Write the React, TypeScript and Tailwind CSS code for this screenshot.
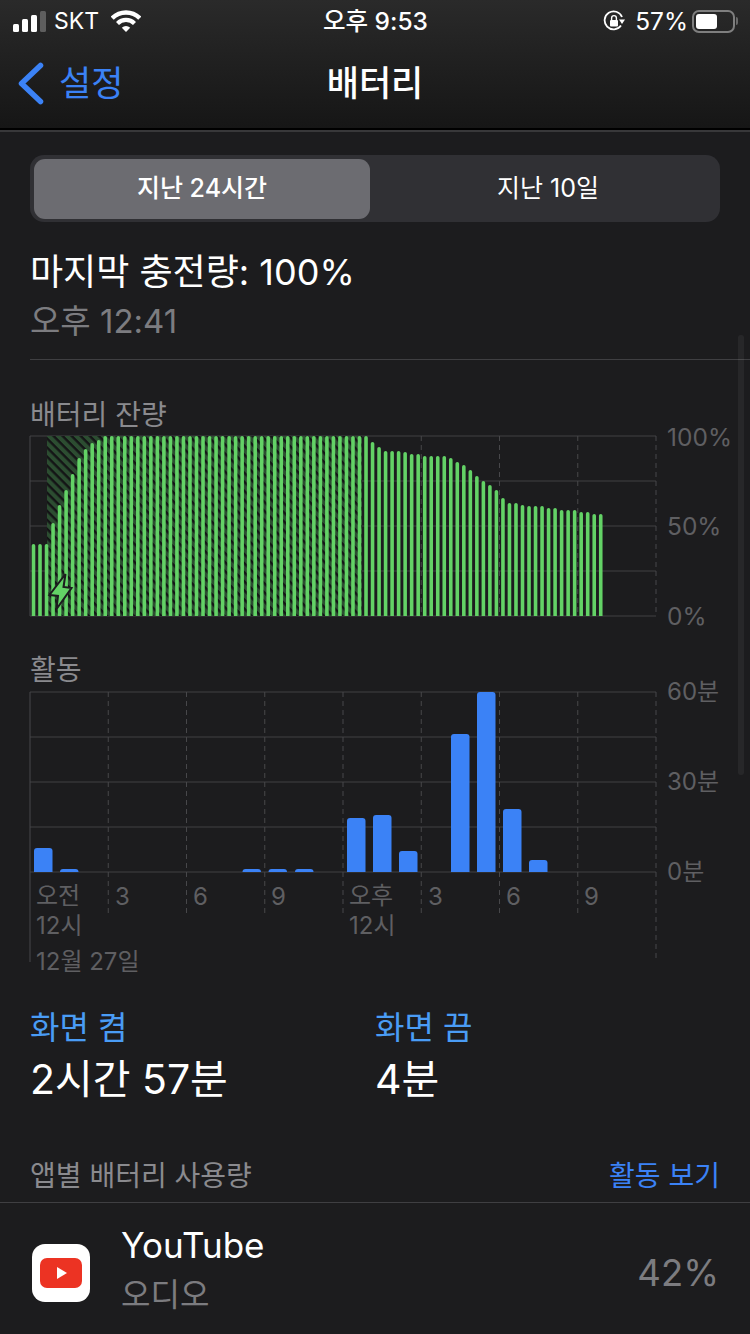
const chargeTops = [544, 544, 544, 523, 505, 490, 474, 458, 449, 443, 440];
const drainTops = [
  442, 447, 451, 451, 451, 452, 454, 454, 456, 456, 456, 456, 458, 462, 465, 470, 476, 481, 485, 490, 498, 503, 503,
  505, 506, 506, 506, 508, 508, 510, 510, 510, 512, 512, 514, 514,
];
// 88 slots: charging ramp, 41 full bars, then the drain
const batteryTops = [...chargeTops, ...Array(41).fill(436), ...drainTops];

const activityBars = [
  { x: 34, top: 848 },
  { x: 60, top: 869 },
  { x: 242.5, top: 869 },
  { x: 268.5, top: 869 },
  { x: 295, top: 869 },
  { x: 347, top: 818 },
  { x: 373, top: 815 },
  { x: 399, top: 851 },
  { x: 451, top: 734 },
  { x: 477, top: 692 },
  { x: 503, top: 809 },
  { x: 529, top: 860 },
];

const columns = [30, 108.25, 186.5, 264.75, 343, 421.25, 499.5, 577.75, 656];
const rows = [0, 45, 90, 135, 180];

const StatusBar = () => (
  <div className="flex h-[44px] items-center justify-between pb-[2px] pl-[13px] pr-[12px] text-white">
    <div className="flex w-[200px] items-center">
      <div className="flex h-[21px] items-end gap-[3px]">
        <div className="h-[8px] w-[6px] rounded-[1.5px] bg-white"></div>
        <div className="h-[13px] w-[6px] rounded-[1.5px] bg-white"></div>
        <div className="h-[17px] w-[6px] rounded-[1.5px] bg-white"></div>
        <div className="h-[21px] w-[6px] rounded-[1.5px] bg-[#5e5e5e]"></div>
      </div>
      <span className="ml-[8px] text-[23px] leading-[30px]">SKT</span>
      <svg width="30" height="22" viewBox="0 0 30 22" className="ml-[12px]">
        <path d="M15 22 L10.8 17.8 A6 6 0 0 1 19.2 17.8 Z" fill="#fff" />
        <path d="M6.5 13.5 A12 12 0 0 1 23.5 13.5" stroke="#fff" strokeWidth="4.2" fill="none" />
        <path d="M1.2 8.2 A19.5 19.5 0 0 1 28.8 8.2" stroke="#fff" strokeWidth="4.4" fill="none" />
      </svg>
    </div>
    <span className="text-[24.5px] font-medium leading-[30px]">오후 9:53</span>
    <div className="flex w-[200px] items-center justify-end">
      <svg width="22" height="22" viewBox="0 0 22 22" className="mr-[10px]">
        <path d="M18 15.5 A9 9 0 1 1 19 7" stroke="#fff" strokeWidth="1.8" fill="none" />
        <path d="M16 9.5 L22 9.5 L19 14 Z" fill="#fff" />
        <rect x="7" y="10" width="8" height="6.5" rx="1" fill="#fff" />
        <path d="M8.6 10 V8 A2.4 2.4 0 0 1 13.4 8 V10" stroke="#fff" strokeWidth="1.4" fill="none" />
      </svg>
      <span className="text-[24.5px] leading-[30px]">57%</span>
      <div className="ml-[4px] flex h-[23px] w-[43px] items-center rounded-[7px] border-2 border-[#7f7f7f] p-[2px]">
        <div className="h-[15px] w-[21px] rounded-[3px] bg-white"></div>
      </div>
      <div className="ml-[1px] h-[8px] w-[2px] rounded-r-[2px] bg-[#6a6a6a]"></div>
    </div>
  </div>
);

const NavBar = () => (
  <div className="relative flex h-[86px] items-start pl-[17px]">
    <svg width="27" height="43" viewBox="0 0 27 43" className="mt-[18px]">
      <path d="M23.5 3.5 L4.5 21.5 L23.5 39.5" stroke="#3b82f6" strokeWidth="5.5" strokeLinecap="round" strokeLinejoin="round" fill="none" />
    </svg>
    <span className="ml-[15px] mt-[14px] text-[35px] leading-[50px] text-[#3b82f6]">설정</span>
    <span className="absolute left-0 right-0 top-[14px] text-center text-[35px] font-medium leading-[50px] text-white">
      배터리
    </span>
  </div>
);

const Grid = ({ top, tall = [] }: { top: number; tall?: number[] }) => (
  <>
    {rows.map((r) => (
      <line key={r} x1="30" x2="656" y1={r + 1} y2={r + 1} stroke="#2e2e30" strokeWidth="2" />
    ))}
    {columns.map((x, i) => (
      <line
        key={x}
        x1={x}
        x2={x}
        y1="1"
        y2={tall[i] ? tall[i] - top : 181}
        stroke="#47474a"
        strokeWidth="1"
        strokeDasharray={i === 0 ? undefined : '5 4'}
      />
    ))}
  </>
);

const roundedTop = (x: number, top: number, w: number, bottom: number, r: number) =>
  `M${x} ${bottom} V${top + r} Q${x} ${top} ${x + r} ${top} H${x + w - r} Q${x + w} ${top} ${x + w} ${top + r} V${bottom} Z`;

const BatteryChart = () => (
  <div className="relative h-[182px] w-[750px]">
    <svg width="750" height="182" viewBox="0 0 750 182" className="absolute left-[-30px] top-0">
      <defs>
        <pattern id="hatch" width="6.4" height="6.4" patternUnits="userSpaceOnUse" patternTransform="rotate(45)">
          <rect width="6.4" height="6.4" fill="#2c4d31" />
          <rect width="6.4" height="2.4" fill="#141416" />
        </pattern>
      </defs>
      <Grid top={435} />
      <rect x="47" y="1" width="315" height="180" fill="url(#hatch)" />
      {batteryTops.map((top, i) => (
        <path key={i} d={roundedTop(31.7 + i * 6.52, top - 435, 3.6, 181, 1.8)} fill="#63d266" />
      ))}
      <path
        d="M65.5 139 L49.5 160 L58 161 L56.5 174 L71.5 153 L63.5 152 Z"
        fill="#63d266"
        stroke="#1c1c1e"
        strokeWidth="2"
        strokeLinejoin="miter"
      />
    </svg>
    <span className="absolute left-[637px] top-[-13px] text-[24.5px] leading-[30px] text-[#5f5f62]">100%</span>
    <span className="absolute left-[637px] top-[76px] text-[24.5px] leading-[30px] text-[#5f5f62]">50%</span>
    <span className="absolute left-[637px] top-[166px] text-[24.5px] leading-[30px] text-[#5f5f62]">0%</span>
  </div>
);

const ActivityChart = () => (
  <div className="relative h-[272px] w-[750px]">
    <svg width="750" height="272" viewBox="0 0 750 272" className="absolute left-[-30px] top-0">
      <Grid top={691} tall={[962, 916, 916, 916, 916, 916, 916, 916, 960]} />
      {activityBars.map((b) => (
        <path key={b.x} d={roundedTop(b.x, b.top - 691, 18.5, 181, 3)} fill="#3b82f6" />
      ))}
    </svg>
    <span className="absolute left-[637px] top-[-14px] text-[24px] leading-[30px] text-[#5f5f62]">60분</span>
    <span className="absolute left-[637px] top-[76px] text-[24px] leading-[30px] text-[#5f5f62]">30분</span>
    <span className="absolute left-[637px] top-[166px] text-[24px] leading-[30px] text-[#5f5f62]">0분</span>
    <div className="absolute left-[6px] top-[190px] w-[80px] text-[24px] leading-[30px] text-[#5f5f62]">
      오전<br />12시
    </div>
    <span className="absolute left-[85px] top-[191px] text-[24px] leading-[30px] text-[#5f5f62]">3</span>
    <span className="absolute left-[163px] top-[191px] text-[24px] leading-[30px] text-[#5f5f62]">6</span>
    <span className="absolute left-[241px] top-[191px] text-[24px] leading-[30px] text-[#5f5f62]">9</span>
    <div className="absolute left-[319px] top-[190px] w-[80px] text-[24px] leading-[30px] text-[#5f5f62]">
      오후<br />12시
    </div>
    <span className="absolute left-[398px] top-[191px] text-[24px] leading-[30px] text-[#5f5f62]">3</span>
    <span className="absolute left-[476px] top-[191px] text-[24px] leading-[30px] text-[#5f5f62]">6</span>
    <span className="absolute left-[554px] top-[191px] text-[24px] leading-[30px] text-[#5f5f62]">9</span>
    <span className="absolute left-[6px] top-[256px] text-[24px] leading-[30px] text-[#5f5f62]">12월 27일</span>
  </div>
);

const YouTubeIcon = () => (
  <div className="flex h-[58px] w-[58px] items-center justify-center rounded-[13px] bg-white">
    <svg width="42" height="30" viewBox="0 0 42 30">
      <rect width="42" height="30" rx="7" fill="#ec3323" />
      <path d="M17 9 L27 15 L17 21 Z" fill="#fff" />
    </svg>
  </div>
);

export default function App() {
  return (
    <div className="relative h-[1334px] w-[750px] overflow-hidden bg-[#1c1c1e] font-['Inter','Noto_Sans_CJK_KR',sans-serif]">
      <div className="h-[130px] border-b-2 border-black bg-gradient-to-b from-[#2a2a2a] to-[#161616]">
        <StatusBar />
        <NavBar />
      </div>
      <div className="h-[2px] bg-[#38383a]"></div>

      <div className="pl-[30px] pt-[23px]">
        <div className="flex h-[67px] w-[690px] items-center rounded-[14px] bg-[#303034] p-[4px]">
          <div className="flex h-[60px] w-[336px] items-center justify-center rounded-[11px] bg-[#6c6c71] text-[25px] font-medium text-white">
            지난 24시간
          </div>
          <div className="flex h-[60px] flex-1 items-center justify-center pl-[10px] text-[25px] text-white">
            지난 10일
          </div>
        </div>

        <div className="mt-[26px] text-[36px] leading-[48px] text-white">마지막 충전량: 100%</div>
        <div className="mt-[1px] text-[33px] leading-[48px] text-[#7c7c80]">오후 12:41</div>
        <div className="mt-[14px] h-px bg-[#3f3f42]"></div>

        <div className="mt-[37px] text-[28px] leading-[36px] text-[#8a8a8e]">배터리 잔량</div>
        <div className="mt-[2px]">
          <BatteryChart />
        </div>

        <div className="mt-[35px] text-[28px] leading-[36px] text-[#8a8a8e]">활동</div>
        <div className="mt-[3px]">
          <ActivityChart />
        </div>

        <div className="mt-[43px] flex">
          <div className="w-[345px]">
            <div className="text-[32px] leading-[44px] text-[#4a9cf5]">화면 켬</div>
            <div className="mt-[2px] text-[41px] leading-[54px] text-white">2시간 57분</div>
          </div>
          <div>
            <div className="text-[32px] leading-[44px] text-[#4a9cf5]">화면 끔</div>
            <div className="mt-[2px] text-[41px] leading-[54px] text-white">4분</div>
          </div>
        </div>

        <div className="mt-[50px] flex w-[690px] items-center justify-between">
          <span className="text-[28px] leading-[40px] text-[#8a8a8e]">앱별 배터리 사용량</span>
          <span className="text-[28px] leading-[40px] text-[#3b82f6]">활동 보기</span>
        </div>
      </div>

      <div className="mt-[6px] h-px bg-[#3f3f42]"></div>
      <div className="flex h-[140px] items-center pl-[32px] pr-[31px]">
        <YouTubeIcon />
        <div className="mb-[7px] ml-[31px] flex-1">
          <div className="text-[35px] leading-[48px] text-white">YouTube</div>
          <div className="mt-[2px] text-[32px] leading-[48px] text-[#7c7c80]">오디오</div>
        </div>
        <span className="text-[36.5px] text-[#7c7c80]">42%</span>
      </div>

      <div className="absolute right-[6px] top-[335px] h-[440px] w-[6px] rounded-full bg-white/[0.05]"></div>
    </div>
  );
}
